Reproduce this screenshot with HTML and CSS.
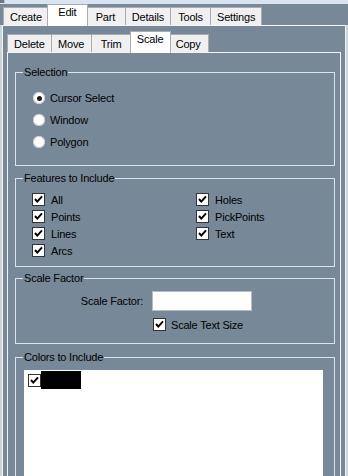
FILE: index.html
```html
<!DOCTYPE html>
<html>
    <head>
        <link rel="stylesheet" href="styles.css">
    </head>

    <body>

        <div class="topStrip"><span class="appIcon"></span></div>

        <div class="tabRow outerTabs">
            <div class="tab">Create</div>
            <div class="tab selected">Edit</div>
            <div class="tab">Part</div>
            <div class="tab">Details</div>
            <div class="tab">Tools</div>
            <div class="tab">Settings</div>
        </div>

        <div class="outerPanel">

            <div class="tabRow">
                <div class="tab">Delete</div>
                <div class="tab">Move</div>
                <div class="tab">Trim</div>
                <div class="tab selected">Scale</div>
                <div class="tab">Copy</div>
            </div>

            <div class="innerPanel">

                <fieldset class="group selectionGroup">
                    <legend>Selection</legend>
                    <div class="options">
                        <div class="option"><span class="radio checked"></span>Cursor Select</div>
                        <div class="option"><span class="radio"></span>Window</div>
                        <div class="option"><span class="radio"></span>Polygon</div>
                    </div>
                </fieldset>

                <fieldset class="group featuresGroup">
                    <legend>Features to Include</legend>
                    <div class="featureGrid">
                        <div class="check"><span class="box"><svg width="11" height="11" viewBox="0 0 11 11"><polyline points="2,5 4.3,7.6 9,2.4"/></svg></span>All</div>
                        <div class="check"><span class="box"><svg width="11" height="11" viewBox="0 0 11 11"><polyline points="2,5 4.3,7.6 9,2.4"/></svg></span>Holes</div>
                        <div class="check"><span class="box"><svg width="11" height="11" viewBox="0 0 11 11"><polyline points="2,5 4.3,7.6 9,2.4"/></svg></span>Points</div>
                        <div class="check"><span class="box"><svg width="11" height="11" viewBox="0 0 11 11"><polyline points="2,5 4.3,7.6 9,2.4"/></svg></span>PickPoints</div>
                        <div class="check"><span class="box"><svg width="11" height="11" viewBox="0 0 11 11"><polyline points="2,5 4.3,7.6 9,2.4"/></svg></span>Lines</div>
                        <div class="check"><span class="box"><svg width="11" height="11" viewBox="0 0 11 11"><polyline points="2,5 4.3,7.6 9,2.4"/></svg></span>Text</div>
                        <div class="check"><span class="box"><svg width="11" height="11" viewBox="0 0 11 11"><polyline points="2,5 4.3,7.6 9,2.4"/></svg></span>Arcs</div>
                    </div>
                </fieldset>

                <fieldset class="group scaleGroup">
                    <legend>Scale Factor</legend>
                    <div class="factorRow">
                        <span class="factorLabel">Scale Factor:</span>
                        <span class="factorInput"></span>
                    </div>
                    <div class="check textSizeCheck"><span class="box"><svg width="11" height="11" viewBox="0 0 11 11"><polyline points="2,5 4.3,7.6 9,2.4"/></svg></span>Scale Text Size</div>
                </fieldset>

                <fieldset class="group colorsGroup">
                    <legend>Colors to Include</legend>
                    <div class="colorList">
                        <div class="colorItem">
                            <span class="box"><svg width="11" height="11" viewBox="0 0 11 11"><polyline points="2,5 4.3,7.6 9,2.4"/></svg></span>
                            <span class="swatch"></span>
                        </div>
                    </div>
                </fieldset>

            </div>

        </div>

    </body>

</html>
```

FILE: styles.css
```css
body {
    margin: 0;
    height: 476px;
    overflow: hidden;
    background-color: #778899;
    font-family: "Liberation Sans", Arial, sans-serif;
    font-size: 11px;
    letter-spacing: -0.2px;
    color: #000;
}

.topStrip {
    height: 4px;
    background-color: #d9e4f0;
}

.appIcon {
    display: block;
    width: 4px;
    height: 3px;
    background-color: #6f7983;
    border-right: 1px solid #b8c3ce;
}

/* tabs */

.tabRow {
    display: flex;
    align-items: flex-end;
    height: 21px;
}

.outerTabs {
    padding-left: 3px;
}

.tab {
    box-sizing: border-box;
    height: 18px;
    min-width: 41px;
    padding: 0 6px;
    border: 1px solid #acacac;
    border-bottom: none;
    background-color: #f0f0f0;
    line-height: 18px;
    text-align: center;
    white-space: nowrap;
}

.tab + .tab {
    margin-left: -1px;
}

.tab.selected {
    position: relative;
    z-index: 1;
    height: 22px;
    margin: 0 -2px -1px -2px;
    background-color: #fff;
    line-height: 15px;
}

/* panels */

.outerPanel {
    height: 450px;
    margin: 0 2px;
    padding: 5px 4px 0 4px;
    border: 1px solid #f4f4f4;
    border-bottom: none;
    box-shadow: -2px 0 0 #cfd4d9, 2px 0 0 #cfd4d9;
}

.innerPanel {
    height: 411px;
    overflow: hidden;
    padding: 12px 5px 0 7px;
    border: 1px solid #f4f4f4;
    border-bottom: none;
}

/* group boxes */

.group {
    margin: 0;
    padding: 0 8px 12px 8px;
    min-width: 0;
    border: 1px solid #dce3ea;
}

.group legend {
    margin-left: -1px;
    padding: 0 1px;
    line-height: 14px;
}

.featuresGroup {
    margin-top: 5px;
    padding-bottom: 7px;
}

.scaleGroup {
    margin-top: 4px;
    padding-bottom: 10px;
}

.colorsGroup {
    margin-top: 6px;
    padding-right: 11px;
}

/* radio buttons */

.options {
    margin: 8px 0 0 9px;
}

.option {
    display: flex;
    align-items: center;
    gap: 5px;
    height: 22px;
}

.radio {
    display: flex;
    align-items: center;
    justify-content: center;
    width: 12px;
    height: 12px;
    border-radius: 50%;
    background-color: #fff;
    box-shadow: inset 0 0 0 1px #c6ccd2;
}

.radio.checked::after {
    content: "";
    width: 5px;
    height: 5px;
    border-radius: 50%;
    background-color: #1b1b1b;
}

/* check boxes */

.featureGrid {
    display: grid;
    grid-template-columns: 164px auto;
    margin: 6px 0 0 8px;
}

.check {
    display: flex;
    align-items: center;
    gap: 6px;
    height: 17px;
}

.box {
    display: block;
    width: 11px;
    height: 11px;
    border: 1px solid #333;
    background-color: #fff;
}

.box svg {
    display: block;
}

.box polyline {
    fill: none;
    stroke: #000;
    stroke-width: 2;
}

/* scale factor */

.factorRow {
    display: flex;
    align-items: center;
    gap: 9px;
    margin-top: 6px;
}

.factorLabel {
    width: 119px;
    text-align: right;
}

.factorInput {
    box-sizing: border-box;
    width: 100px;
    height: 20px;
    border: 1px solid #b4bcc4;
    background-color: #fff;
}

.textSizeCheck {
    margin: 5px 0 0 129px;
    gap: 5px;
}

/* colour list */

.colorList {
    height: 120px;
    margin-top: 6px;
    padding: 1px 0 0 4px;
    background-color: #fff;
}

.colorItem {
    display: flex;
    align-items: center;
}

.swatch {
    width: 40px;
    height: 18px;
    background-color: #000;
}
```
